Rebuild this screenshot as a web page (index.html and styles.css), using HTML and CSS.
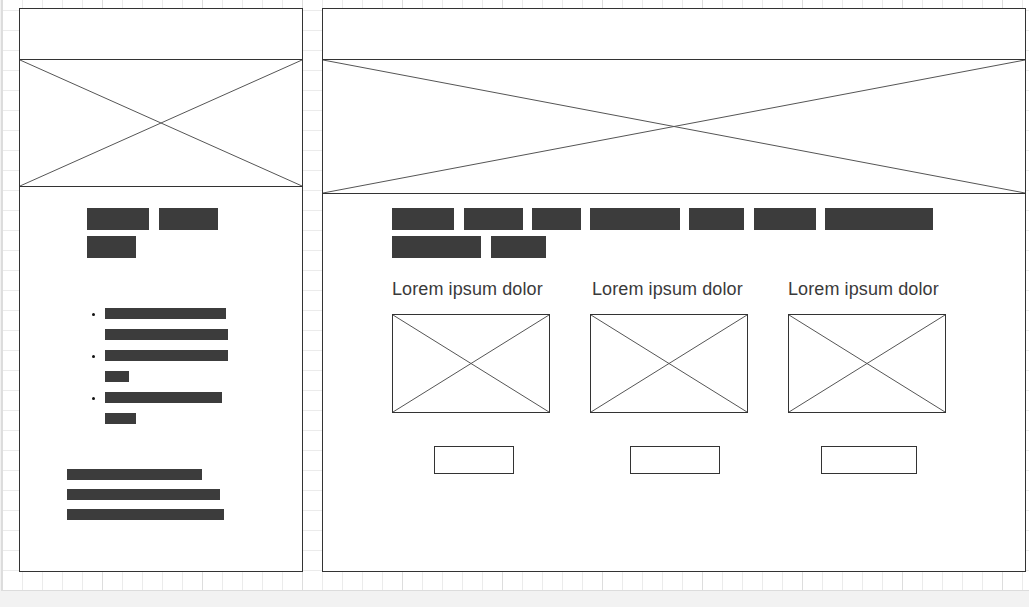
FILE: index.html
```html
<!DOCTYPE html>
<html lang="en">
<head>
    <meta charset="UTF-8">
    <meta name="viewport" content="width=device-width, initial-scale=1.0">
    <title>Wireframe</title>
    <link rel="stylesheet" href="styles.css">
</head>
<body>
    <div class="canvas">

        <!-- Sidebar frame -->
        <div class="panel panel-side">
            <div class="panel-head"></div>
            <div class="hero hero-side">
                <svg class="cross" viewBox="0 0 100 100" preserveAspectRatio="none">
                    <line x1="0" y1="0" x2="100" y2="100" vector-effect="non-scaling-stroke"/>
                    <line x1="0" y1="100" x2="100" y2="0" vector-effect="non-scaling-stroke"/>
                </svg>
            </div>
            <div class="side-body">
                <div class="tags side-tags">
                    <span class="tag" style="width: 62px"></span>
                    <span class="tag" style="width: 59px"></span>
                    <span class="tag" style="width: 49px"></span>
                </div>

                <ul class="bars-list">
                    <li class="bars-item">
                        <span class="dot"></span>
                        <div class="bars">
                            <span class="bar" style="width: 121px"></span>
                            <span class="bar" style="width: 123px"></span>
                        </div>
                    </li>
                    <li class="bars-item">
                        <span class="dot"></span>
                        <div class="bars">
                            <span class="bar" style="width: 123px"></span>
                            <span class="bar" style="width: 24px"></span>
                        </div>
                    </li>
                    <li class="bars-item">
                        <span class="dot"></span>
                        <div class="bars">
                            <span class="bar" style="width: 117px"></span>
                            <span class="bar" style="width: 31px"></span>
                        </div>
                    </li>
                </ul>

                <div class="bars footer-bars">
                    <span class="bar" style="width: 135px"></span>
                    <span class="bar" style="width: 153px"></span>
                    <span class="bar" style="width: 157px"></span>
                </div>
            </div>
        </div>

        <!-- Main frame -->
        <div class="panel panel-main">
            <div class="panel-head"></div>
            <div class="hero hero-main">
                <svg class="cross" viewBox="0 0 100 100" preserveAspectRatio="none">
                    <line x1="0" y1="0" x2="100" y2="100" vector-effect="non-scaling-stroke"/>
                    <line x1="0" y1="100" x2="100" y2="0" vector-effect="non-scaling-stroke"/>
                </svg>
            </div>
            <div class="main-body">
                <div class="tags main-tags">
                    <span class="tag tag-wide-gap" style="width: 62px"></span>
                    <span class="tag" style="width: 59px"></span>
                    <span class="tag" style="width: 49px"></span>
                    <span class="tag" style="width: 90px"></span>
                    <span class="tag tag-wide-gap" style="width: 55px"></span>
                    <span class="tag" style="width: 62px"></span>
                    <span class="tag" style="width: 108px"></span>
                    <span class="tag tag-wide-gap" style="width: 89px"></span>
                    <span class="tag" style="width: 55px"></span>
                </div>

                <div class="cards">
                    <div class="card">
                        <p class="card-title">Lorem ipsum dolor</p>
                        <div class="thumb">
                            <svg class="cross" viewBox="0 0 100 100" preserveAspectRatio="none">
                                <line x1="0" y1="0" x2="100" y2="100" vector-effect="non-scaling-stroke"/>
                                <line x1="0" y1="100" x2="100" y2="0" vector-effect="non-scaling-stroke"/>
                            </svg>
                        </div>
                        <span class="btn btn-1"></span>
                    </div>
                    <div class="card">
                        <p class="card-title card-title-shift">Lorem ipsum dolor</p>
                        <div class="thumb">
                            <svg class="cross" viewBox="0 0 100 100" preserveAspectRatio="none">
                                <line x1="0" y1="0" x2="100" y2="100" vector-effect="non-scaling-stroke"/>
                                <line x1="0" y1="100" x2="100" y2="0" vector-effect="non-scaling-stroke"/>
                            </svg>
                        </div>
                        <span class="btn btn-2"></span>
                    </div>
                    <div class="card">
                        <p class="card-title">Lorem ipsum dolor</p>
                        <div class="thumb">
                            <svg class="cross" viewBox="0 0 100 100" preserveAspectRatio="none">
                                <line x1="0" y1="0" x2="100" y2="100" vector-effect="non-scaling-stroke"/>
                                <line x1="0" y1="100" x2="100" y2="0" vector-effect="non-scaling-stroke"/>
                            </svg>
                        </div>
                        <span class="btn btn-3"></span>
                    </div>
                </div>
            </div>
        </div>

    </div>
</body>
</html>
```

FILE: styles.css
```css
* {
    box-sizing: border-box;
}

body {
    margin: 0;
    background: #f2f2f2;
    font-family: 'Liberation Sans', Arial, sans-serif;
}

/* grid paper */
.canvas {
    display: flex;
    gap: 19px;
    width: 1028px;
    height: 591px;
    margin-left: 1px;
    padding: 8px 0 0 17px;
    border-left: 1px solid #dcdcdc;
    border-bottom: 1px solid #dcdcdc;
    background-color: #ffffff;
    background-image:
        linear-gradient(to right, #dddddd 1px, transparent 1px),
        linear-gradient(to right, #ebebeb 1px, transparent 1px),
        linear-gradient(to bottom, #ebebeb 1px, transparent 1px);
    background-size: 100px 100px, 20px 20px, 20px 20px;
    background-position: 0 0, 0 0, 0 10px;
}

.panel {
    display: flex;
    flex-direction: column;
    height: 564px;
    border: 1px solid #333333;
    background: #ffffff;
}

.panel-side {
    width: 284px;
}

.panel-main {
    width: 704px;
}

.panel-head {
    height: 50px;
    flex-shrink: 0;
}

.hero {
    border-top: 1px solid #333333;
    border-bottom: 1px solid #333333;
    flex-shrink: 0;
}

.hero-side {
    height: 128px;
}

.hero-main {
    height: 135px;
}

.cross {
    display: block;
    width: 100%;
    height: 100%;
}

.cross line {
    stroke: #555555;
    stroke-width: 1;
}

.tags {
    display: flex;
    flex-wrap: wrap;
    gap: 6px 10px;
}

.tag {
    display: block;
    height: 22px;
    background: #3c3c3c;
}

.main-tags {
    width: 580px;
    gap: 6px 9px;
}

.tag-wide-gap {
    margin-right: 1px;
}

.bar {
    display: block;
    height: 11px;
    background: #3c3c3c;
}

/* sidebar */
.side-body {
    padding: 21px 0 0 47px;
}

.side-tags {
    width: 150px;
    margin-left: 20px;
}

.bars-list {
    list-style: none;
    margin: 50px 0 0 25px;
    padding: 0;
    display: flex;
    flex-direction: column;
    gap: 10px;
}

.bars-item {
    display: flex;
}

.dot {
    width: 3px;
    height: 3px;
    margin: 5px 10px 0 0;
    border-radius: 50%;
    background: #111111;
}

.bars {
    display: flex;
    flex-direction: column;
    gap: 10px;
}

.footer-bars {
    margin-top: 45px;
    gap: 9px;
}

/* main */
.main-body {
    padding: 14px 0 0 69px;
}

.cards {
    display: flex;
    gap: 40px;
    margin-top: 21px;
}

.card {
    display: flex;
    flex-direction: column;
    align-items: flex-start;
    width: 158px;
}

.card-title {
    margin: 0;
    font-size: 18px;
    line-height: 20px;
    letter-spacing: 0.1px;
    color: #3a3a3a;
    white-space: nowrap;
}

.card-title-shift {
    margin-left: 2px;
}

.thumb {
    width: 158px;
    height: 99px;
    margin-top: 15px;
    border: 1px solid #333333;
}

.btn {
    display: block;
    height: 28px;
    margin-top: 33px;
    border: 1px solid #333333;
}

.btn-1 {
    width: 80px;
    margin-left: 42px;
}

.btn-2 {
    width: 90px;
    margin-left: 40px;
}

.btn-3 {
    width: 96px;
    margin-left: 33px;
}
```
